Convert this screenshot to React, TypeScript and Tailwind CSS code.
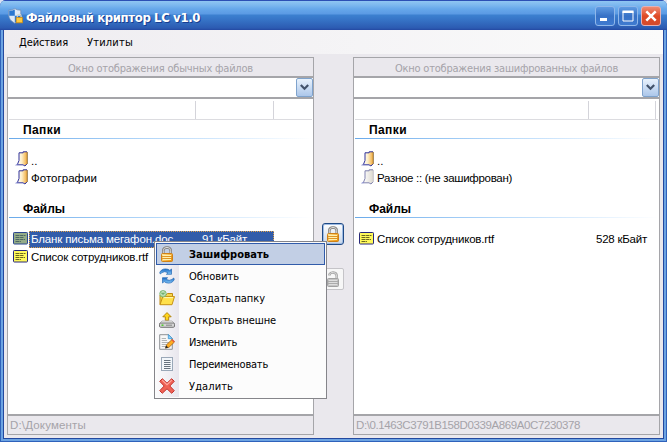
import { useLayoutEffect, useRef, useState } from "react";
import type { ReactNode } from "react";

const UI = "font-['DejaVu_Sans_Condensed','DejaVu_Sans',sans-serif]";
const LIST = "font-['Liberation_Sans',sans-serif]";

/** Single-line label tracked so that it occupies a given width. */
function Fit({ children, w, className = "" }: { children: string; w: number; className?: string }) {
  const ref = useRef<HTMLSpanElement>(null);
  const [spacing, setSpacing] = useState(0);
  useLayoutEffect(() => {
    if (ref.current) {
      const natural = ref.current.getBoundingClientRect().width;
      setSpacing((w - natural) / children.length);
    }
  }, [w, children]);
  return (
    <span ref={ref} className={`inline-block shrink-0 whitespace-pre ${className}`} style={{ letterSpacing: `${spacing}px` }}>
      {children}
    </span>
  );
}

function Svg({ children, size = 16 }: { children: ReactNode; size?: number }) {
  return (
    <svg width={size} height={size} viewBox="0 0 16 16" className="block shrink-0">
      {children}
    </svg>
  );
}

function Shades() {
  return (
    <svg width="0" height="0" className="absolute">
      <defs>
        <linearGradient id="gold" x1="0" y1="0" x2="1" y2="0.6">
          <stop offset="0" stopColor="#ffe9a0" />
          <stop offset="1" stopColor="#f09a14" />
        </linearGradient>
        <linearGradient id="page" x1="0" y1="0" x2="1" y2="0">
          <stop offset="0" stopColor="#ffffff" />
          <stop offset="0.45" stopColor="#fdeec6" />
          <stop offset="1" stopColor="#f0a93a" />
        </linearGradient>
        <linearGradient id="pale" x1="0" y1="0" x2="1" y2="0">
          <stop offset="0" stopColor="#ffffff" />
          <stop offset="1" stopColor="#dcd8cf" />
        </linearGradient>
        <linearGradient id="blue" x1="0" y1="0" x2="0" y2="1">
          <stop offset="0" stopColor="#1767c4" />
          <stop offset="1" stopColor="#83c8f8" />
        </linearGradient>
      </defs>
    </svg>
  );
}

function Lock({ open = false }: { open?: boolean }) {
  const shackle = open ? "M4.5 4.5V3.2Q5.5 1.2 8.3 1.4Q11.7 1.6 11.7 5V8" : "M4.3 8V4.7Q4.3 1.4 8 1.4T11.7 4.7V8";
  return (
    <Svg>
      <path d={shackle} fill="none" stroke={open ? "#a5a5a5" : "#7d7b78"} strokeWidth="2.5" />
      <path d={shackle} fill="none" stroke={open ? "#d8d8d8" : "#dddddd"} strokeWidth="1" />
      <rect x="2.5" y="7.5" width="11" height="8" rx="1" fill={open ? "#c4c4c4" : "url(#gold)"} stroke={open ? "#a2a2a2" : "#cf8116"} />
      <path d="M4 9.5h8M4 11.5h8M4 13.5h8" stroke={open ? "#dedede" : "#fff0ae"} />
      <path d="M3 10.5h10M3 12.5h10" stroke={open ? "#a4a4a4" : "#d88c1c"} strokeWidth="0.8" />
    </Svg>
  );
}

function Refresh() {
  return (
    <Svg>
      <path d="M0.8 4.2Q3.5 -0.3 9 1.3L10.8 2.4L12.5 1V6.3H7.4L9 4.8Q5.6 2.6 3 4.6L1.2 6Z" fill="url(#blue)" stroke="#2267b4" strokeWidth="0.7" />
      <path d="M15.2 11.8Q12.5 16.3 7 14.7L5.2 13.6L3.5 15V9.7H8.6L7 11.2Q10.4 13.4 13 11.4L14.8 10Z" fill="url(#blue)" stroke="#2267b4" strokeWidth="0.7" />
    </Svg>
  );
}

function NewFolder() {
  return (
    <Svg>
      <path d="M1 14.5V5H7L8.5 3.5H13.5V7" fill="#f7d648" stroke="#c08b12" />
      <path d="M1 14.7L3.8 6.6H15.5L13 14.7Z" fill="#ffe04b" stroke="#c69114" />
      <path d="M4.5 7.6H14" stroke="#fff7b5" />
      <circle cx="4" cy="3.8" r="3.3" fill="#a9d99b" stroke="#6fa969" strokeWidth="0.7" />
      <path d="M4 1.5V6M1.8 3.8H6.2" stroke="#fff" strokeWidth="1.8" />
      <path d="M4 1.8V5.8M2 3.8H6" stroke="#4f9e48" strokeWidth="0.9" />
    </Svg>
  );
}

function Eject() {
  return (
    <Svg>
      <path d="M8 0.6L12.2 4.8H9.7V8.3H6.3V4.8H3.8Z" fill="#ffd51d" stroke="#ae7e09" strokeWidth="0.9" />
      <path d="M3 9H13L15.5 11.5H0.5Z" fill="#f3f3f3" stroke="#a5a5a5" strokeWidth="0.8" />
      <rect x="0.5" y="11" width="15" height="4.3" rx="1.2" fill="#d3d3d3" stroke="#757575" />
      <path d="M7 13.2H13" stroke="#858585" />
      <rect x="2.5" y="12.4" width="2" height="1.6" fill="#57c936" />
    </Svg>
  );
}

function Edit() {
  return (
    <Svg>
      <path d="M0.7 0.7H9.5L13.3 4.5V15.3H0.7Z" fill="#f7f7f7" stroke="#8e9295" />
      <path d="M9.3 0.5L13.5 4.7H9.3Z" fill="#8bd2fa" stroke="#3a93d3" strokeWidth="0.8" />
      <path d="M2.7 4.5H7M2.7 6.5H8M2.7 8.5H10M2.7 10.5H8M2.7 12.5H7" stroke="#a8abae" strokeWidth="0.9" />
      <path d="M6.6 14L7.5 10.8L13 5.5L15.5 8L10 13.3Z" fill="#ffad22" stroke="#9e6318" strokeWidth="0.8" />
      <path d="M12.3 6.1L13.4 5L15.8 7.4L14.7 8.6Z" fill="#e7593e" />
      <path d="M6.2 14.4L7.1 11.4L9.3 13.6Z" fill="#252525" />
    </Svg>
  );
}

function Rename() {
  return (
    <Svg>
      <rect x="2.5" y="1.5" width="11" height="13" fill="#f2f6fa" stroke="#9aa8b8" />
      <path d="M5 4.5h6.5M5 6.5h6.5M5 8.5h6.5M5 10.5h6.5M5 12.5h6.5" stroke="#65717d" />
    </Svg>
  );
}

function Remove() {
  return (
    <Svg>
      <path d="M3.3 0.7L8 5.2L12.7 0.7L15.3 3.3L10.8 8L15.3 12.7L12.7 15.3L8 10.8L3.3 15.3L0.7 12.7L5.2 8L0.7 3.3Z" fill="#ef6255" stroke="#c2312b" strokeLinejoin="round" />
      <path d="M3.2 2.2L8 6.7L12.8 2.2" fill="none" stroke="#ffaaa0" strokeWidth="1.1" />
    </Svg>
  );
}

function FolderIcon({ pale = false }: { pale?: boolean }) {
  return (
    <svg width="16" height="16" viewBox="-0.5 0 16 16" className="mb-[3px] block shrink-0">
      <path d="M0.3 14L2 12.5V15Z" fill="#c7cbef" />
      <path d="M3.5 1.5H7L8.5 0.7H11.7V13L10 14.7L8 13.5H2L3.5 10.5Z" fill={pale ? "url(#pale)" : "url(#page)"} />
      <path d="M11.8 13V1" stroke={pale ? "#b8b6c4" : "#77541c"} strokeWidth="0.8" />
      <path d="M11.5 0.8H7.6V1.8H3.5V9.5L1.8 13.8H7.5L9.5 15L11.3 13" fill="none" stroke={pale ? "#8082ae" : "#30329a"} strokeWidth="1" />
      <path d="M0 14.2L2 13.5" stroke="#8e93d2" />
    </svg>
  );
}

function FileIcon({ selected = false }: { selected?: boolean }) {
  return (
    <svg width="15" height="13" viewBox="0 0 15 13" className="mb-[2px] block shrink-0">
      <rect x="0.5" y="0.5" width="14" height="11.5" rx="0.8" fill={selected ? "#94ac88" : "#fff95a"} stroke={selected ? "#2b468f" : "#28287c"} />
      <path d="M2.5 3.5H12.5M2.5 5.5H11M2.5 7.5H12M2.5 9.5H8" stroke={selected ? "#4c6765" : "#6b671e"} strokeDasharray="4 .6 3 .5" />
    </svg>
  );
}

function AppIcon() {
  return (
    <Svg>
      <path d="M0.7 2.2Q4.7 2.2 6.8 0.6Q9 2.2 12.8 2.2V7Q12.8 12 6.8 15.2Q0.7 12 0.7 7Z" fill="#dfeaf7" stroke="#6f8db6" strokeWidth="0.8" />
      <path d="M6.8 1.5V7.7H1.2V2.8Q5 2.8 6.8 1.5ZM6.8 7.7H12.3Q11.8 12 6.8 14.6Z" fill="#2b78d0" />
      <path d="M9.3 10V8Q9.3 6.2 11.2 6.2T13.2 8V10" fill="none" stroke="#d6d3c4" strokeWidth="1.1" />
      <rect x="8.2" y="9.6" width="6.2" height="5.2" fill="#ffc83c" stroke="#c98c18" strokeWidth="0.8" />
    </Svg>
  );
}

function TitleButton({ close = false, children }: { close?: boolean; children: ReactNode }) {
  return (
    <div
      className={`flex h-5 w-5 items-center justify-center rounded-[3px] border ${
        close
          ? "border-[#e4b0b4] bg-linear-to-b from-[#ef8a72] via-[#df4a25] to-[#d44a2c]"
          : "border-[#8fb7ea] bg-linear-to-b from-[#5f9be2] via-[#3771c6] to-[#3f7bd0]"
      }`}
    >
      <svg width="18" height="18" viewBox="0 0 18 18">{children}</svg>
    </div>
  );
}

function Group({ title, w }: { title: string; w: number }) {
  return (
    <div className="flex h-[19px] flex-col">
      <div className="flex h-[18px] items-center pt-[2px] pl-3.5 text-[12px] leading-none font-bold">
        <Fit w={w}>{title}</Fit>
      </div>
      <div className="h-px bg-linear-to-r from-[#6aaaea] via-[#b8dafa] to-white" />
    </div>
  );
}

function Row({ icon, children, className = "" }: { icon: ReactNode; children: ReactNode; className?: string }) {
  return <div className={`flex h-[18px] items-center text-[11.5px] leading-none ${className}`}>{icon}{children}</div>;
}

interface PanelProps {
  title: string;
  titleWidth: number;
  path: string;
  pathWidth: number;
  columns: string;
  folders: ReactNode;
  files: ReactNode;
}

function Panel({ title, titleWidth, path, pathWidth, columns, folders, files }: PanelProps) {
  return (
    <section className="flex w-[307px] flex-col">
      <header className={`flex h-5 items-center justify-center border border-[#a5a5a9] pt-[2px] text-[11px] leading-none text-[#a5a3a9] ${UI}`}>
        <Fit w={titleWidth}>{title}</Fit>
      </header>
      <div className="flex h-[21px] justify-end border border-[#a5a5a9] bg-white">
        <div className="flex h-[19px] w-[17px] items-center justify-center rounded-[2px] border border-[#7fa3cd] bg-linear-to-b from-[#e9f2fc] to-[#acc7ea]">
          <svg width="9" height="7" viewBox="0 0 9 7"><path d="M0.8 1L4.5 4.7L8.2 1" fill="none" stroke="#43536b" strokeWidth="2.2" /></svg>
        </div>
      </div>
      <div className={`flex h-[317px] flex-col border border-[#a5a5a9] bg-white px-px text-black ${LIST}`}>
        <div className={`grid h-[21px] border-b border-[#dcdce0] ${columns}`}>
          <span className="mt-0.5 border-r border-[#d4d4da]" />
          <span className="mt-0.5 border-r border-[#d4d4da]" />
        </div>
        <Group title="Папки" w={38} />
        <div className="mt-3 flex flex-col">{folders}</div>
        <div className="mt-3"><Group title="Файлы" w={42} /></div>
        <div className="mt-3 flex flex-col">{files}</div>
      </div>
      <footer className={`flex h-5 items-center border border-[#a5a5a9] pt-px pl-[2px] text-[11.5px] leading-none text-[#a5a3a9] ${LIST}`}>
        <Fit w={pathWidth}>{path}</Fit>
      </footer>
    </section>
  );
}

const actions = [
  { label: "Зашифровать", w: 80, icon: <Lock /> },
  { label: "Обновить", w: 50, icon: <Refresh /> },
  { label: "Создать папку", w: 76, icon: <NewFolder /> },
  { label: "Открыть внешне", w: 87, icon: <Eject /> },
  { label: "Изменить", w: 48, icon: <Edit /> },
  { label: "Переименовать", w: 79, icon: <Rename /> },
  { label: "Удалить", w: 44, icon: <Remove /> },
];

function ContextMenu() {
  return (
    <div className={`absolute top-[241px] left-[154px] h-[158px] w-[173px] border border-[#85858a] bg-[#fcfcfc] p-px text-[11px] leading-none text-black ${UI}`}>
      <div className="h-[154px] bg-linear-to-r from-[#fbfbfc] to-[#e8e6ed] bg-[length:23px_100%] bg-no-repeat">
        {actions.map(({ label, w, icon }, i) => (
          <div key={label} className={`flex h-[22px] items-center border pl-[2px] ${i === 0 ? "border-[#315caa] bg-[#c2cfe5] font-bold" : "border-transparent"}`}>
            {icon}
            <Fit w={w} className="ml-[14px]">{label}</Fit>
          </div>
        ))}
      </div>
    </div>
  );
}

export default function App() {
  return (
    <div className="relative h-[442px] w-[667px] overflow-hidden bg-[#d9e0f2]">
      <Shades />
      <div className="flex h-full flex-col overflow-hidden rounded-t-[6px] bg-[#2c54ac]">
        <div className="flex h-[30px] shrink-0 items-center border-t border-[#2c4fb4] bg-[linear-gradient(#8fc6f2_0px,#7db8ef_4px,#66a7ea_8px,#5b9ae4_13px,#3c80d0_14px,#3673c6_19px,#2c5bb2_27px,#2448a2_29px)] pt-px pr-[6px] pl-2">
          <AppIcon />
          <Fit w={174} className="ml-[2px] pt-[2px] font-['DejaVu_Sans_Condensed','DejaVu_Sans',sans-serif] text-[13px] leading-none font-bold text-white [text-shadow:1px_1px_0_#173d91]">Файловый криптор LC v1.0</Fit>
          <div className="ml-auto flex gap-[3px]">
            <TitleButton><path d="M4 12.5H11" stroke="white" strokeWidth="3" /></TitleButton>
            <TitleButton><path d="M4 4.5H14V14H4Z" fill="none" stroke="white" /><path d="M3.5 4.8H14.5" stroke="white" strokeWidth="2.5" /></TitleButton>
            <TitleButton close><path d="M4.3 4.3L13.7 13.7M13.7 4.3L4.3 13.7" stroke="white" strokeWidth="2.5" /></TitleButton>
          </div>
        </div>
        <div className="flex min-h-0 flex-1 border-x border-b border-[#2f62bb]">
          <div className="flex min-w-0 flex-1 border-x-2 border-b-2 border-[#6ca3e2]">
            <div className={`flex min-w-0 flex-1 flex-col border-x border-b border-[#24499f] bg-[#eae8ed] ${UI}`}>
              <nav className="flex h-6 items-center bg-linear-to-r from-[#eeecf0] to-[#fbfbfb] pl-[15px] text-[11px] leading-none text-black">
                <Fit w={49}>Действия</Fit>
                <Fit w={46} className="ml-[19px]">Утилиты</Fit>
              </nav>
              <main className="flex pt-[3px] pl-[3px]">
                <Panel
                  title="Окно отображения обычных файлов" titleWidth={185}
                  path="D:\Документы" pathWidth={76}
                  columns="grid-cols-[187px_78px]"
                  folders={<>
                    <Row className="pl-[6px]" icon={<FolderIcon />}><span className="pt-1">..</span></Row>
                    <Row className="pl-[6px]" icon={<FolderIcon />}><Fit w={66} className="pt-[2px]">Фотографии</Fit></Row>
                  </>}
                  files={<>
                    <Row className="pl-1" icon={<FileIcon selected />}>
                      <div className="ml-px flex h-[17px] w-[245px] items-center border border-dotted border-[#e0a24a] bg-[#315caa] pl-px text-white">
                        <Fit w={142} className="pt-[2px]">Бланк письма мегафон.doc</Fit>
                        <Fit w={45} className="ml-[29px] pt-[2px]">91 кБайт</Fit>
                      </div>
                    </Row>
                    <Row className="pl-1" icon={<FileIcon />}><Fit w={117} className="ml-[3px] pt-[2px]">Список сотрудников.rtf</Fit></Row>
                  </>}
                />
                <div className="flex w-[39px] flex-col items-start pt-[166px] pl-2">
                  <div className="flex h-[22px] w-[22px] items-center justify-center rounded-[3px] border border-[#1f4a86] bg-linear-to-b from-white to-[#c8d6e8] shadow-[inset_0_0_0_1px_#9dbbe4]"><Lock /></div>
                  <div className="mt-[23px] flex h-[22px] w-[22px] items-center justify-center rounded-[2px] border border-[#c5c4c8] bg-[#f7f7f7]"><Lock open /></div>
                </div>
                <Panel
                  title="Окно отображения зашифрованных файлов" titleWidth={223}
                  path="D:\0.1463C3791B158D0339A869A0C7230378" pathWidth={224}
                  columns="grid-cols-[234px_67px]"
                  folders={<>
                    <Row className="pl-[6px]" icon={<FolderIcon />}><span className="pt-1">..</span></Row>
                    <Row className="pl-[6px]" icon={<FolderIcon pale />}><Fit w={135} className="pt-[2px]">Разное :: (не зашифрован)</Fit></Row>
                  </>}
                  files={
                    <Row className="pl-1" icon={<FileIcon />}>
                      <Fit w={117} className="ml-[3px] pt-[2px]">Список сотрудников.rtf</Fit>
                      <Fit w={51} className="mr-[11px] ml-auto pt-[2px]">528 кБайт</Fit>
                    </Row>
                  }
                />
              </main>
            </div>
          </div>
        </div>
      </div>
      <ContextMenu />
    </div>
  );
}
